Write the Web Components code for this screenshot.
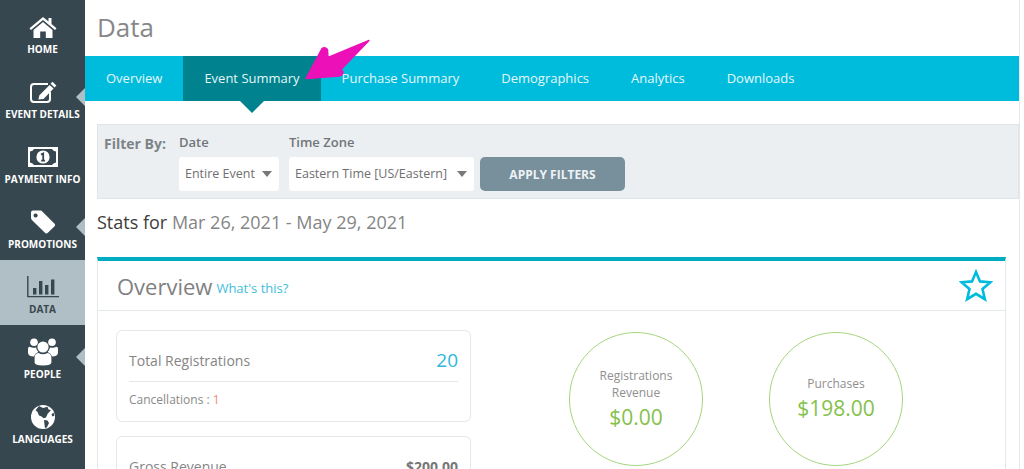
<!DOCTYPE html>
<html>
<head>
<meta charset="utf-8">
<title>Data</title>
<style>
  html, body { margin: 0; height: 469px; overflow: hidden; background: #fff; }
  body { font-family: "Open Sans", "Liberation Sans", sans-serif; }
</style>
</head>
<body>
<event-app>
  <side-nav slot="nav">
    <nav-item label="Home">
      <svg width="28" height="22" viewBox="0 0 28 22"><path fill="#fff" d="M14 1 L19.5 5.6 V2 H22.5 V8.1 L27.5 12.3 L26 14 L14 4 L2 14 L.5 12.3 Z M14 6 L23.5 13.9 V22 H16.8 V15.5 H11.2 V22 H4.5 V13.9 Z"/></svg>
    </nav-item>
    <nav-item label="Event Details" notch>
      <svg width="28" height="22" viewBox="0 0 28 22"><path fill="none" stroke="#fff" stroke-width="2" d="M21 11 V18 Q21 21 18 21 H5 Q2 21 2 18 V6 Q2 3 5 3 H19"/><path fill="#fff" d="M23.5 .8 L27.4 4.4 L25.6 6.4 L21.6 2.8 Z M20.6 3.9 L24.6 7.5 L14.5 18 L9.4 18.6 L10.4 14.3 Z"/></svg>
    </nav-item>
    <nav-item label="Payment Info">
      <svg width="30" height="20" viewBox="0 0 30 20"><path fill="#fff" fill-rule="evenodd" d="M0 0 H30 V20 H0 Z M2 4.5 V15.5 Q5 16 6 18 H24 Q25 16 28 15.5 V4.5 Q25 4 24 2 H6 Q5 4 2 4.5 Z"/><circle cx="15" cy="10" r="6.6" fill="#fff"/><path fill="none" stroke="#37474f" stroke-width="1.8" d="M13 7.6 L15.2 6.4 V13.6 M13.2 13.6 H17"/></svg>
    </nav-item>
    <nav-item label="Promotions" notch>
      <svg width="26" height="24" viewBox="0 0 26 24"><path fill="#fff" fill-rule="evenodd" d="M3 .6 H10.5 Q11.5 .6 12.3 1.4 L24.6 13.8 Q25.8 15 24.6 16.2 L17.6 23 Q16.4 24 15.2 22.9 L2.4 10.6 Q1 9.2 1 8 V2.6 Q1 .6 3 .6 Z M5.6 3.4 A2.1 2.1 0 1 0 5.61 3.4 Z"/></svg>
    </nav-item>
    <nav-item label="Data" active>
      <svg width="32" height="22" viewBox="0 0 32 22"><path fill="none" stroke="#37474f" stroke-width="1.4" d="M.8 0 V20.6 H32"/><path fill="#37474f" d="M6 12 H9.4 V18.6 H6 Z M12 5 H15.4 V18.6 H12 Z M18 9 H21.4 V18.6 H18 Z M24 3.5 H27.4 V18.6 H24 Z"/></svg>
    </nav-item>
    <nav-item label="People" notch>
      <svg width="30" height="28" viewBox="0 0 30 28"><g fill="#fff"><circle cx="6" cy="4.2" r="3.8"/><circle cx="24" cy="4.2" r="3.8"/><circle cx="15" cy="9" r="5.6"/><path d="M0 10.5 Q0 8.8 1.8 8.7 Q4.5 10.6 8 9.4 Q8.6 12.2 10.4 14 Q6.8 15.4 6 18.6 Q0 18 0 15 Z M30 10.5 Q30 8.8 28.2 8.7 Q25.5 10.6 22 9.4 Q21.4 12.2 19.6 14 Q23.2 15.4 24 18.6 Q30 18 30 15 Z M10.5 15 Q15 17.6 19.5 15 Q23.4 15.6 23.4 20 V24.6 Q23.4 27.6 15 27.6 Q6.6 27.6 6.6 24.6 V20 Q6.6 15.6 10.5 15 Z"/></g></svg>
    </nav-item>
    <nav-item label="Languages">
      <svg width="24" height="24" viewBox="0 0 24 24"><circle cx="12" cy="12" r="12" fill="#fff"/><path fill="#37474f" d="M8 .9 L12 3 L16.5 1.8 L17.5 4.5 L20 5 L16.5 9 L15 12.5 L12.6 13.2 L10.6 11.5 L8 10.5 L6.5 7 L4.6 5.2 Z M13 15 L16.5 15.6 L18 18 L15.8 22.6 L14 23 L13.4 18.6 Z M20.5 9.5 L22.4 7.5 L23.5 10.5 L21.5 11.5 Z"/></svg>
    </nav-item>
  </side-nav>

  <h1-title>Data</h1-title>
  <tab-bar>
    <tab-link>Overview</tab-link>
    <tab-link active>Event Summary</tab-link>
    <tab-link>Purchase Summary</tab-link>
    <tab-link>Demographics</tab-link>
    <tab-link>Analytics</tab-link>
    <tab-link>Downloads</tab-link>
  </tab-bar>
  <filter-bar></filter-bar>
  <stats-range from="Mar 26, 2021 - May 29, 2021"></stats-range>
  <overview-card>
    <stat-box label="Total Registrations" value="20" big>Cancellations : <span style="color:#f08a72">1</span></stat-box>
    <stat-box label="Gross Revenue" value="$200.00"></stat-box>
    <stat-circle slot="circles" value="$0.00">Registrations<br>Revenue</stat-circle>
    <stat-circle slot="circles" value="$198.00">Purchases</stat-circle>
  </overview-card>
  <pink-arrow></pink-arrow>
</event-app>

<script>
function define(name, html, cls) {
  const tpl = document.createElement("template");
  tpl.innerHTML = html;
  customElements.define(name, class extends (cls || HTMLElement) {
    constructor() {
      super();
      this.attachShadow({ mode: "open" }).appendChild(tpl.content.cloneNode(true));
      if (this.setup) this.setup();
    }
  });
}

define("event-app", /* html */ `
  <style>
    :host { display: flex; width: 1024px; height: 469px; overflow: hidden; position: relative; color: #888; }
    main { flex: 1; min-width: 0; box-sizing: border-box; width: 935px; margin-right: 4px; border-right: 1px solid #e3e8ea; height: 520px; }
  </style>
  <slot name="nav"></slot>
  <main><slot></slot></main>
`);

define("side-nav", /* html */ `
  <style>
    :host { display: block; flex: 0 0 85px; width: 85px; height: 469px; background: #37474f; }
  </style>
  <slot></slot>
`);

class NavItem extends HTMLElement {
  setup() {
    this.shadowRoot.querySelector("span").textContent = this.getAttribute("label");
  }
}
define("nav-item", /* html */ `
  <style>
    :host { display: flex; flex-direction: column; align-items: center; position: relative; height: 65px; box-sizing: border-box; color: #fff; font: 700 10px/14px "Open Sans", sans-serif; text-transform: uppercase; white-space: nowrap; }
    :host([active]) { background: #b0bec5; color: #37474f; }
    .icon { height: 28px; margin-top: 13px; display: flex; align-items: center; justify-content: center; }
    span { margin-top: 1px; }
    :host([notch])::after { content: ""; position: absolute; right: 0; top: 23px; border: 9.5px solid transparent; border-left: 0; border-right-color: #b0bec5; }
  </style>
  <div class="icon"><slot></slot></div>
  <span></span>
`, NavItem);

define("h1-title", /* html */ `
  <style>
    :host { display: block; height: 56px; box-sizing: border-box; padding: 9px 0 0 12px; font: 400 26px/36px "Open Sans", sans-serif; color: #888; }
  </style>
  <slot></slot>
`);

define("tab-bar", /* html */ `
  <style>
    :host { display: flex; height: 45px; background: #00bcdc; margin-bottom: 23px; }
  </style>
  <slot></slot>
`);

define("tab-link", /* html */ `
  <style>
    :host { display: block; position: relative; padding: 0 21px; font: 400 13px/45px "Open Sans", sans-serif; color: #e4f7fb; white-space: nowrap; }
    :host([active]) { background: #00838f; }
    :host([active])::after { content: ""; position: absolute; left: 50%; top: 45px; margin-left: -12px; border: 12px solid transparent; border-bottom: 0; border-top-color: #00838f; }
  </style>
  <slot></slot>
`);

define("select-box", /* html */ `
  <style>
    :host { display: flex; align-items: center; box-sizing: border-box; height: 34px; padding: 0 6px; background: #fff; border-radius: 3px; font: 400 12.5px/34px "Open Sans", sans-serif; color: #6f6f6f; white-space: nowrap; justify-content: space-between; }
    i { width: 0; height: 0; border: 5.5px solid transparent; border-bottom: 0; border-top: 6px solid #78787a; margin-right: 1px; }
  </style>
  <slot></slot><i></i>
`);

define("filter-bar", /* html */ `
  <style>
    :host { display: flex; box-sizing: border-box; height: 75px; margin-left: 12px; background: #eceff1; border: 1px solid #e0e4e6; font-family: "Open Sans", sans-serif; }
    .by { width: 81px; padding: 10px 0 0 6px; box-sizing: border-box; font: 700 14px/18px "Open Sans", sans-serif; color: #7d8488; }
    .field { margin-right: 10px; }
    label { display: block; height: 32px; padding-top: 9px; box-sizing: border-box; font: 600 13px/16px "Open Sans", sans-serif; color: #70767a; }
    button { align-self: flex-end; height: 34px; width: 145px; margin: 0 0 7px -4px; border: 0; border-radius: 5px; background: #78909c; color: #eef2f4; font: 700 12px "Open Sans", sans-serif; }
    .d select-box { width: 100px; }
    .t select-box { width: 185px; }
  </style>
  <div class="by">Filter By:</div>
  <div class="field d"><label>Date</label><select-box>Entire Event</select-box></div>
  <div class="field t"><label>Time Zone</label><select-box>Eastern Time [US/Eastern]</select-box></div>
  <button>APPLY FILTERS</button>
`);

class StatsRange extends HTMLElement {
  setup() {
    this.shadowRoot.querySelector("span").textContent = this.getAttribute("from");
  }
}
define("stats-range", /* html */ `
  <style>
    :host { display: block; height: 58px; box-sizing: border-box; padding: 9px 0 0 12px; font: 400 18px/28px "Open Sans", sans-serif; color: #3c3c3c; }
    span { color: #858585; }
  </style>
  Stats for <span></span>
`, StatsRange);

define("overview-card", /* html */ `
  <style>
    :host { display: block; width: 909px; margin-left: 12px; box-sizing: border-box; border: 1px solid #e3e8ea; border-top: 4px solid #00acc1; }
    header { display: flex; align-items: center; height: 50px; box-sizing: border-box; padding: 0 12px 0 19px; border-bottom: 1px solid #e3e8ea; }
    h2 { margin: 0; font: 400 22px/30px "Open Sans", sans-serif; color: #808080; }
    a { margin-left: 4px; padding-top: 5px; font: 400 13px/18px "Open Sans", sans-serif; color: #3fbddc; flex: 1; }
    .body { display: flex; padding: 19px 18px 0; }
    .left { width: 355px; display: flex; flex-direction: column; gap: 14px; }
    .right { display: flex; gap: 66px; margin-left: 98px; padding-top: 2px; }
  </style>
  <header>
    <h2>Overview</h2><a>What's this?</a>
    <svg width="34" height="33" viewBox="0 0 34 33"><path fill="none" stroke="#00bcdc" stroke-width="2.6" stroke-linejoin="miter" d="M17 3 L21 12.4 L31.4 13.3 L23.5 20 L25.9 30.2 L17 24.8 L8.1 30.2 L10.5 20 L2.6 13.3 L13 12.4 Z"/></svg>
  </header>
  <div class="body">
    <div class="left"><slot></slot></div>
    <div class="right"><slot name="circles"></slot></div>
  </div>
`);

class StatBox extends HTMLElement {
  setup() {
    this.shadowRoot.querySelector(".l").textContent = this.getAttribute("label");
    this.shadowRoot.querySelector(".v").textContent = this.getAttribute("value");
  }
}
define("stat-box", /* html */ `
  <style>
    :host { display: block; box-sizing: border-box; min-height: 92px; padding: 0 12px; border: 1.5px solid #e3e8ea; border-radius: 6px; }
    .row { display: flex; justify-content: space-between; align-items: center; height: 51px; padding-top: 8px; box-sizing: border-box; font: 400 14px "Open Sans", sans-serif; color: #858585; }
    :host([big]) .row { border-bottom: 1px solid #e3e8ea; }
    .v { font-weight: 700; color: #777; }
    :host([big]) .v { font: 400 19px "Open Sans", sans-serif; color: #2db7dc; }
    .sub { padding-top: 9px; font: 400 12px/18px "Open Sans", sans-serif; color: #8a8a8a; }
  </style>
  <div class="row"><span class="l"></span><span class="v"></span></div>
  <div class="sub"><slot></slot></div>
`, StatBox);

class StatCircle extends HTMLElement {
  setup() {
    this.shadowRoot.querySelector(".v").textContent = this.getAttribute("value");
  }
}
define("stat-circle", /* html */ `
  <style>
    :host { display: flex; flex-direction: column; align-items: center; justify-content: center; box-sizing: border-box; width: 134px; height: 134px; border: 1.5px solid #a5d67e; border-radius: 50%; text-align: center; font: 400 12px/17.5px "Open Sans", sans-serif; color: #8f8f8f; }
    .v { font: 400 21px/30px "Open Sans", sans-serif; color: #84c14a; }
  </style>
  <div><slot></slot></div>
  <div class="v"></div>
`, StatCircle);

define("pink-arrow", /* html */ `
  <style>
    :host { position: absolute; left: 300px; top: 36px; width: 74px; height: 46px; }
    svg { display: block; }
  </style>
  <svg width="74" height="46" viewBox="300 36 74 46">
    <path fill="#ec10b8" stroke="#ec10b8" stroke-width="1.4" stroke-linejoin="round" d="M306 78.5 L322 48.5 Q325 46.5 327.5 49.5 L328 57.5 L369 40.5 L341 69.5 L343 72 Q342.5 76 339 76 Z"/>
  </svg>
`);
</script>
</body>
</html>
